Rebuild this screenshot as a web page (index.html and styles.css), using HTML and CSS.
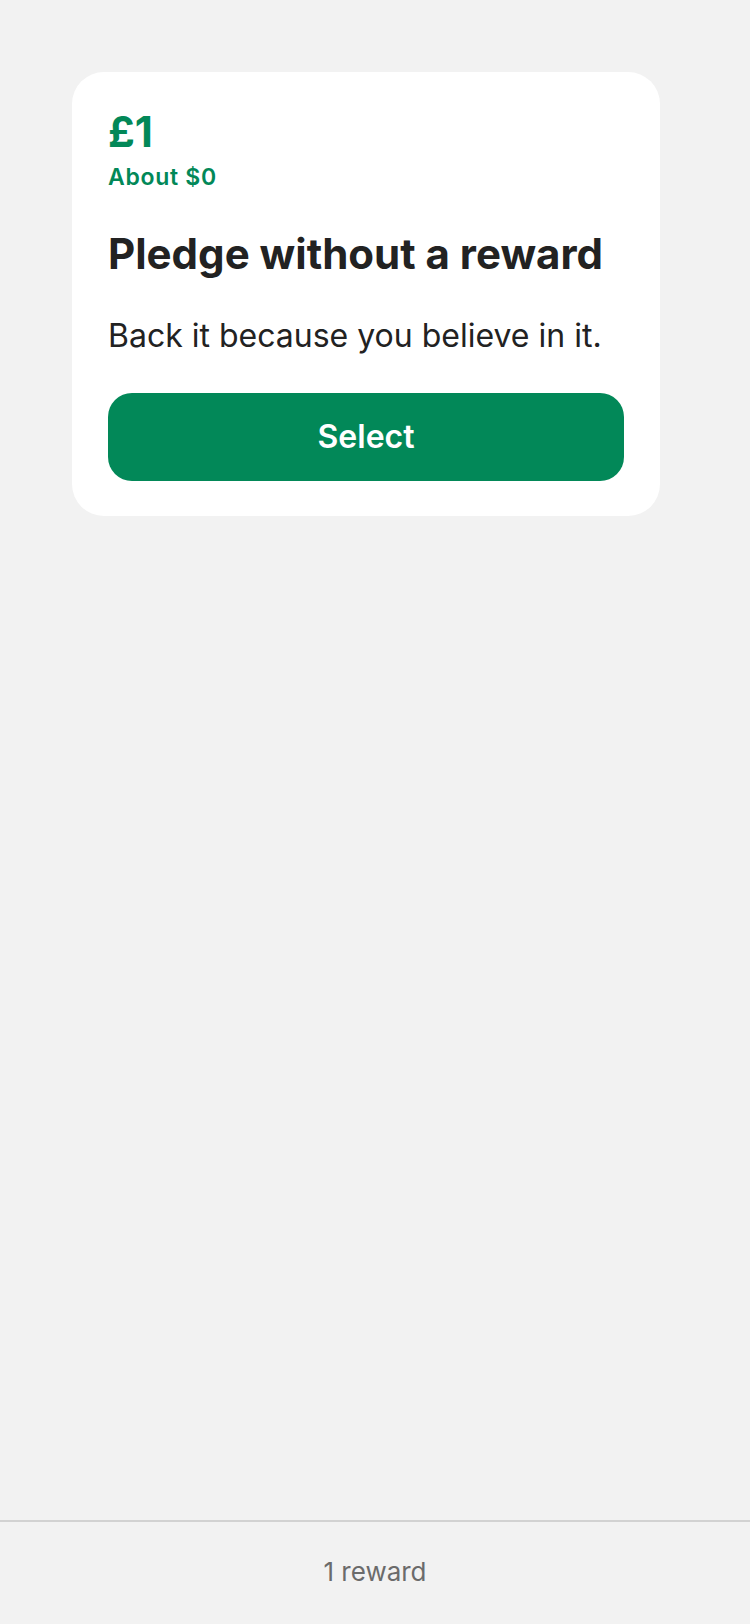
FILE: index.html
```html
<!DOCTYPE html>
<html lang="en">
<head>
<meta charset="utf-8">
<title>Rewards</title>
<link rel="stylesheet" href="styles.css">
</head>
<body>
<div class="page">
  <main class="content">
    <section class="card">
      <div class="amount">£1</div>
      <div class="converted">About $0</div>
      <h1 class="title">Pledge without a reward</h1>
      <p class="desc">Back it because you believe in it.</p>
      <button class="select-btn" type="button">Select</button>
    </section>
  </main>
  <footer class="footer">1 reward</footer>
</div>
</body>
</html>
```

FILE: styles.css
```css
* { box-sizing: border-box; }
html, body {
  margin: 0;
  padding: 0;
  background: #f2f2f2;
  font-family: Inter, "Noto Sans", "Liberation Sans", sans-serif;
}
.page {
  width: 750px;
  height: 1624px;
  display: flex;
  flex-direction: column;
}
.content {
  flex: 1;
  padding: 72px 90px 0 72px;
}
.card {
  width: 588px;
  background: #ffffff;
  border-radius: 32px;
  padding: 36px 36px 35px 36px;
  display: flex;
  flex-direction: column;
}
.amount {
  color: #028858;
  font-size: 42px;
  font-weight: 700;
  line-height: 48px;
}
.converted {
  margin-top: 7px;
  color: #028858;
  font-size: 23px;
  font-weight: 600;
  line-height: 28px;
  letter-spacing: 0.7px;
}
.title {
  margin: 38px 0 0 0;
  color: #222222;
  font-size: 42px;
  font-weight: 700;
  line-height: 50px;
  letter-spacing: 0;
}
.desc {
  margin: 37px 0 0 0;
  color: #222222;
  font-size: 32px;
  font-weight: 400;
  line-height: 40px;
  letter-spacing: 0;
}
.select-btn {
  margin-top: 37px;
  height: 88px;
  width: 100%;
  border: none;
  border-radius: 24px;
  background: #028858;
  color: #ffffff;
  font-family: inherit;
  font-size: 32px;
  font-weight: 600;
  line-height: 40px;
  display: flex;
  align-items: center;
  justify-content: center;
  padding: 0;
}
.footer {
  height: 104px;
  border-top: 2px solid #d2d2d2;
  padding-top: 34px;
  text-align: center;
  color: #6b6b6b;
  font-size: 26px;
  line-height: 32px;
}
```
